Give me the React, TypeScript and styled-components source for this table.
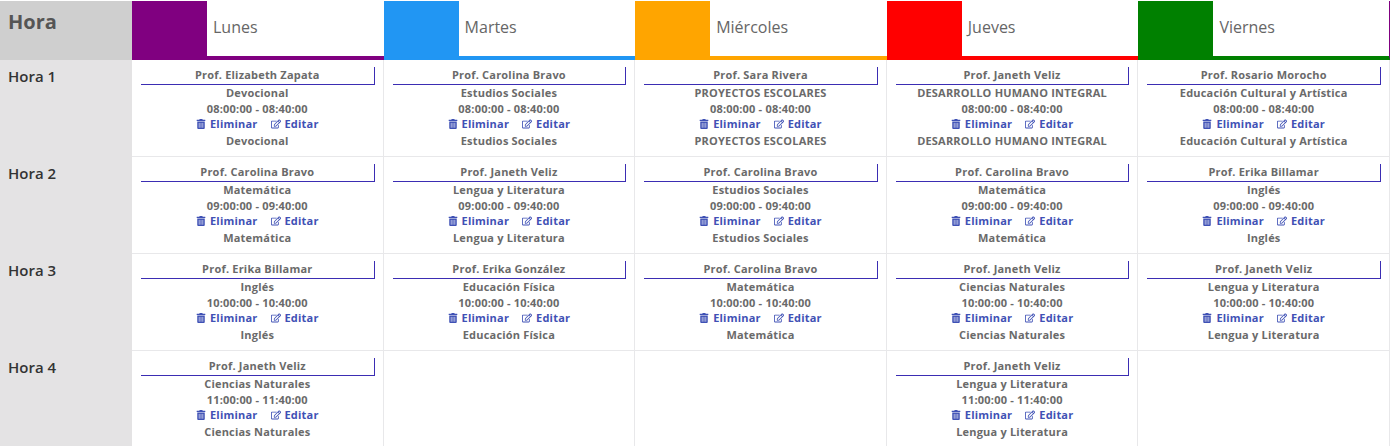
import React from "react";
import styled, { createGlobalStyle } from "styled-components";
import { FaTrashAlt, FaRegEdit } from "react-icons/fa";

const GlobalStyle = createGlobalStyle`
	body {
		margin: 0;
		background: #fff;
		font-family: "Open Sans", "Liberation Sans", sans-serif;
	}
`;

const Table = styled.div`
	display: grid;
	grid-template-columns: 132px repeat(5, 1fr);
	width: 1390px;
	padding-top: 1px;
	box-sizing: border-box;
`;

const HoraHeader = styled.div`
	background: #cfcfcf;
	height: 59px;
	padding: 8px 8px 0;
	box-sizing: border-box;
	font-size: 20px;
	font-weight: 700;
	color: #555;
	line-height: 26px;
`;

const DayHeader = styled.div<{ $color: string; $last?: boolean }>`
	display: flex;
	align-items: center;
	height: 59px;
	padding-bottom: 3px;
	box-sizing: border-box;
	border-bottom: 4px solid ${(p) => p.$color};
	border-right: ${(p) => (p.$last ? "1px solid #800080" : "none")};
	font-size: 16px;
	color: #666;
`;

const Swatch = styled.div<{ $color: string }>`
	width: 75px;
	align-self: stretch;
	margin-bottom: -7px;
	background: ${(p) => p.$color};
	margin-right: 6px;
`;

const HoraCell = styled.div`
	background: #e4e3e4;
	padding: 6px 8px 0;
	font-size: 15px;
	font-weight: 600;
	color: #333;
	line-height: 20px;
	height: 97px;
	box-sizing: border-box;
`;

const Cell = styled.div`
	border-right: 1px solid #e8e8ea;
	border-bottom: 1px solid #e8e8ea;
	padding: 7px 8px 0 8px;
	height: 97px;
	box-sizing: border-box;
	display: flex;
	flex-direction: column;
	align-items: stretch;
	text-align: center;
	font-size: 11px;
	font-weight: 700;
	letter-spacing: 0.2px;
	color: #6a6a6a;
	line-height: 16px;
`;

const Teacher = styled.div`
	border-right: 1px solid #3b2db3;
	border-bottom: 1px solid #3b2db3;
	margin-left: 1px;
	padding-bottom: 1px;
`;

const Actions = styled.div`
	display: flex;
	justify-content: center;
	gap: 13px;
	color: #3f51b5;
	margin-top: -1px;
	margin-bottom: 1px;
`;

const Action = styled.span`
	display: inline-flex;
	align-items: center;
	gap: 4px;

	svg {
		font-size: 10px;
	}
`;

type Lesson = { teacher: string; subject: string; time: string };

const days = [
	{ name: "Lunes", color: "#800080" },
	{ name: "Martes", color: "#2196f3" },
	{ name: "Miércoles", color: "#ffa500" },
	{ name: "Jueves", color: "#ff0000" },
	{ name: "Viernes", color: "#008000" },
];

const L = (teacher: string, subject: string, time: string): Lesson => ({ teacher, subject, time });

const t1 = "08:00:00 - 08:40:00";
const t2 = "09:00:00 - 09:40:00";
const t3 = "10:00:00 - 10:40:00";
const t4 = "11:00:00 - 11:40:00";

const schedule: (Lesson | null)[][] = [
	[
		L("Prof. Elizabeth Zapata", "Devocional", t1),
		L("Prof. Carolina Bravo", "Estudios Sociales", t1),
		L("Prof. Sara Rivera", "PROYECTOS ESCOLARES", t1),
		L("Prof. Janeth Veliz", "DESARROLLO HUMANO INTEGRAL", t1),
		L("Prof. Rosario Morocho", "Educación Cultural y Artística", t1),
	],
	[
		L("Prof. Carolina Bravo", "Matemática", t2),
		L("Prof. Janeth Veliz", "Lengua y Literatura", t2),
		L("Prof. Carolina Bravo", "Estudios Sociales", t2),
		L("Prof. Carolina Bravo", "Matemática", t2),
		L("Prof. Erika Billamar", "Inglés", t2),
	],
	[
		L("Prof. Erika Billamar", "Inglés", t3),
		L("Prof. Erika González", "Educación Física", t3),
		L("Prof. Carolina Bravo", "Matemática", t3),
		L("Prof. Janeth Veliz", "Ciencias Naturales", t3),
		L("Prof. Janeth Veliz", "Lengua y Literatura", t3),
	],
	[
		L("Prof. Janeth Veliz", "Ciencias Naturales", t4),
		null,
		null,
		L("Prof. Janeth Veliz", "Lengua y Literatura", t4),
		null,
	],
];

const LessonCell: React.FC<{ lesson: Lesson | null }> = ({ lesson }) => {
	if (!lesson) return <Cell />;
	return (
		<Cell>
			<Teacher>{lesson.teacher}</Teacher>
			<div>{lesson.subject}</div>
			<div>{lesson.time}</div>
			<Actions>
				<Action>
					<FaTrashAlt /> Eliminar
				</Action>
				<Action>
					<FaRegEdit /> Editar
				</Action>
			</Actions>
			<div>{lesson.subject}</div>
		</Cell>
	);
};

const App: React.FC = () => {
	return (
		<>
			<GlobalStyle />
			<Table>
				<HoraHeader>Hora</HoraHeader>
				{days.map((d, i) => (
					<DayHeader key={d.name} $color={d.color} $last={i === days.length - 1}>
						<Swatch $color={d.color} />
						{d.name}
					</DayHeader>
				))}
				{schedule.map((row, r) => (
					<React.Fragment key={r}>
						<HoraCell>Hora {r + 1}</HoraCell>
						{row.map((lesson, c) => (
							<LessonCell key={c} lesson={lesson} />
						))}
					</React.Fragment>
				))}
			</Table>
		</>
	);
};

export default App;
